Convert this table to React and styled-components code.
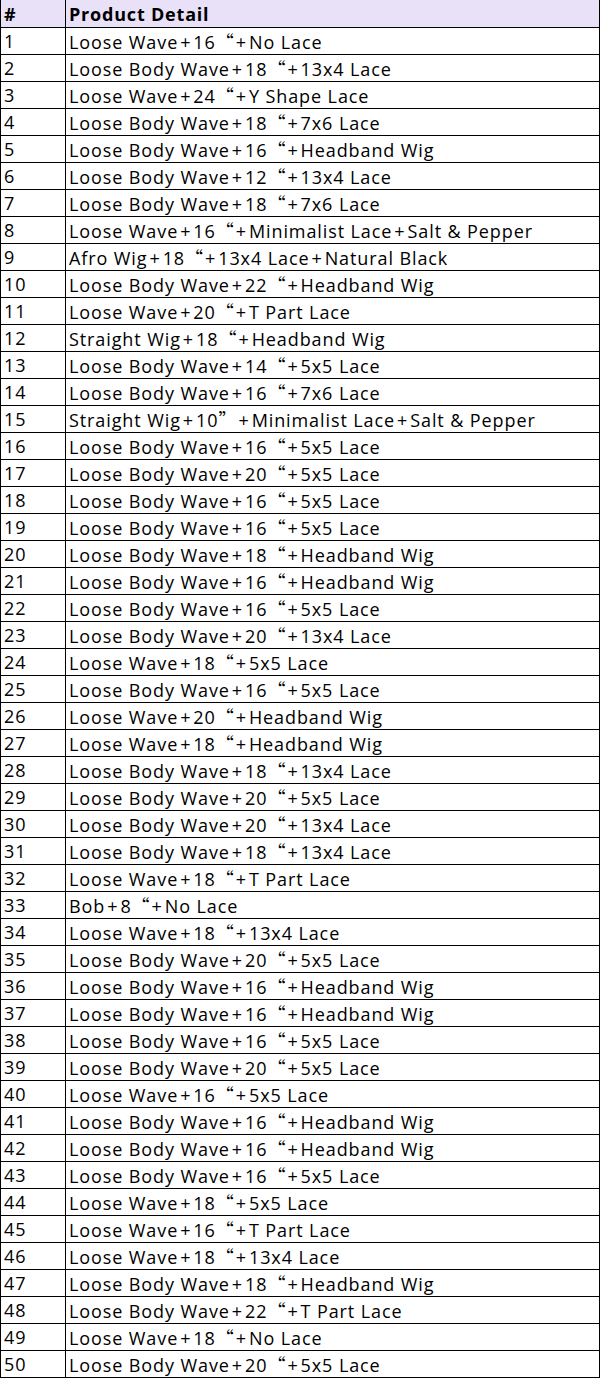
import React from 'react';
import styled, { createGlobalStyle } from 'styled-components';

const GlobalStyle = createGlobalStyle`
  html, body {
    margin: 0;
    padding: 0;
    background: #ffffff;
  }
`

const rows = [
  'Loose Wave+16“+No Lace',
  'Loose Body Wave+18“+13x4 Lace',
  'Loose Wave+24“+Y Shape Lace',
  'Loose Body Wave+18“+7x6 Lace',
  'Loose Body Wave+16“+Headband Wig',
  'Loose Body Wave+12“+13x4 Lace',
  'Loose Body Wave+18“+7x6 Lace',
  'Loose Wave+16“+Minimalist Lace+Salt & Pepper',
  'Afro Wig+18“+13x4 Lace+Natural Black',
  'Loose Body Wave+22“+Headband Wig',
  'Loose Wave+20“+T Part Lace',
  'Straight Wig+18“+Headband Wig',
  'Loose Body Wave+14“+5x5 Lace',
  'Loose Body Wave+16“+7x6 Lace',
  'Straight Wig+10”+Minimalist Lace+Salt & Pepper',
  'Loose Body Wave+16“+5x5 Lace',
  'Loose Body Wave+20“+5x5 Lace',
  'Loose Body Wave+16“+5x5 Lace',
  'Loose Body Wave+16“+5x5 Lace',
  'Loose Body Wave+18“+Headband Wig',
  'Loose Body Wave+16“+Headband Wig',
  'Loose Body Wave+16“+5x5 Lace',
  'Loose Body Wave+20“+13x4 Lace',
  'Loose Wave+18“+5x5 Lace',
  'Loose Body Wave+16“+5x5 Lace',
  'Loose Wave+20“+Headband Wig',
  'Loose Wave+18“+Headband Wig',
  'Loose Body Wave+18“+13x4 Lace',
  'Loose Body Wave+20“+5x5 Lace',
  'Loose Body Wave+20“+13x4 Lace',
  'Loose Body Wave+18“+13x4 Lace',
  'Loose Wave+18“+T Part Lace',
  'Bob+8“+No Lace',
  'Loose Wave+18“+13x4 Lace',
  'Loose Body Wave+20“+5x5 Lace',
  'Loose Body Wave+16“+Headband Wig',
  'Loose Body Wave+16“+Headband Wig',
  'Loose Body Wave+16“+5x5 Lace',
  'Loose Body Wave+20“+5x5 Lace',
  'Loose Wave+16“+5x5 Lace',
  'Loose Body Wave+16“+Headband Wig',
  'Loose Body Wave+16“+Headband Wig',
  'Loose Body Wave+16“+5x5 Lace',
  'Loose Wave+18“+5x5 Lace',
  'Loose Wave+16“+T Part Lace',
  'Loose Wave+18“+13x4 Lace',
  'Loose Body Wave+18“+Headband Wig',
  'Loose Body Wave+22“+T Part Lace',
  'Loose Wave+18“+No Lace',
  'Loose Body Wave+20“+5x5 Lace',
]

const Sheet = styled.div`
  width: 598px;
  display: grid;
  grid-template-columns: 65px 1fr;
  border-left: 1px solid #000;
  border-right: 1px solid #000;
  border-bottom: 1px solid #000;
  font-family: "Open Sans", "Noto Sans", sans-serif;
  color: #000;
`

const Cell = styled.div`
  height: ${p => (p.head ? 27 : 26)}px;
  line-height: ${p => (p.head ? 28 : 27)}px;
  border-bottom: ${p => (p.last ? 'none' : '1px solid #000')};
  border-right: ${p => (p.first ? '1px solid #000' : 'none')};
  background: ${p => (p.head ? '#e8e1f8' : '#ffffff')};
  font-size: 18px;
  font-weight: ${p => (p.head ? 700 : 400)};
  letter-spacing: ${p => (p.head ? 0.8 : 0.9)}px;
  padding-left: 3px;
  white-space: nowrap;
  overflow: hidden;
`

// fullwidth quote marks, as the sheet font draws them
const Quote = styled.span`
  font-family: "Noto Sans CJK SC", sans-serif;
  letter-spacing: 0;
`

// the sheet font gives "+" wide side bearings
const Plus = styled.span`
  padding: 0 2px;
`

function Detail({ text }) {
  return text.split(/([“”+])/).map((part, i) => {
    if (part === '“' || part === '”') return <Quote key={i}>{part}</Quote>;
    if (part === '+') return <Plus key={i}>+</Plus>;
    return part;
  });
}

function App() {
  return (
    <>
      <GlobalStyle />
      <Sheet>
        <Cell head first>#</Cell>
        <Cell head>Product Detail</Cell>
        {rows.map((r, i) => (
          <React.Fragment key={i}>
            <Cell first last={i === rows.length - 1}>{i + 1}</Cell>
            <Cell last={i === rows.length - 1}><Detail text={r} /></Cell>
          </React.Fragment>
        ))}
      </Sheet>
    </>
  );
}

export default App
